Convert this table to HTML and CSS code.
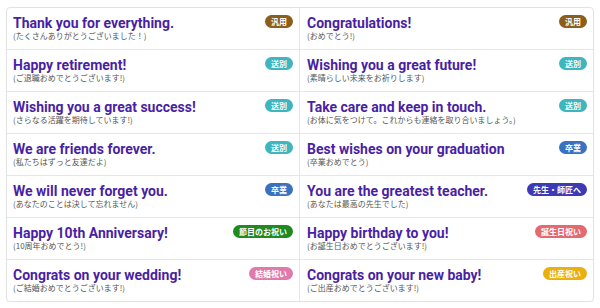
FILE: index.html
```html
<!DOCTYPE html>
<html lang="ja">
<head>
<meta charset="utf-8">
<link rel="stylesheet" href="styles.css">
</head>
<body>
<div class="board">
  <div class="cell"><div class="txt"><div class="en">Thank you for everything.</div><div class="jp">(たくさんありがとうございました！)</div></div><span class="badge b-gen">汎用</span></div>
  <div class="cell"><div class="txt"><div class="en">Congratulations!</div><div class="jp">(おめでとう!)</div></div><span class="badge b-gen">汎用</span></div>
  <div class="cell"><div class="txt"><div class="en">Happy retirement!</div><div class="jp">(ご退職おめでとうございます!)</div></div><span class="badge b-fare">送別</span></div>
  <div class="cell"><div class="txt"><div class="en">Wishing you a great future!</div><div class="jp">(素晴らしい未来をお祈りします)</div></div><span class="badge b-fare">送別</span></div>
  <div class="cell"><div class="txt"><div class="en">Wishing you a great success!</div><div class="jp">(さらなる活躍を期待しています!)</div></div><span class="badge b-fare">送別</span></div>
  <div class="cell"><div class="txt"><div class="en">Take care and keep in touch.</div><div class="jp">(お体に気をつけて。これからも連絡を取り合いましょう。)</div></div><span class="badge b-fare">送別</span></div>
  <div class="cell"><div class="txt"><div class="en">We are friends forever.</div><div class="jp">(私たちはずっと友達だよ)</div></div><span class="badge b-fare">送別</span></div>
  <div class="cell"><div class="txt"><div class="en">Best wishes on your graduation</div><div class="jp">(卒業おめでとう)</div></div><span class="badge b-grad">卒業</span></div>
  <div class="cell"><div class="txt"><div class="en">We will never forget you.</div><div class="jp">(あなたのことは決して忘れません)</div></div><span class="badge b-grad">卒業</span></div>
  <div class="cell"><div class="txt"><div class="en">You are the greatest teacher.</div><div class="jp">(あなたは最高の先生でした)</div></div><span class="badge b-teach">先生・師匠へ</span></div>
  <div class="cell"><div class="txt"><div class="en">Happy 10th Anniversary!</div><div class="jp">(10周年おめでとう!)</div></div><span class="badge b-anniv">節目のお祝い</span></div>
  <div class="cell"><div class="txt"><div class="en">Happy birthday to you!</div><div class="jp">(お誕生日おめでとうございます!)</div></div><span class="badge b-bday">誕生日祝い</span></div>
  <div class="cell"><div class="txt"><div class="en">Congrats on your wedding!</div><div class="jp">(ご結婚おめでとうございます!)</div></div><span class="badge b-wed">結婚祝い</span></div>
  <div class="cell"><div class="txt"><div class="en">Congrats on your new baby!</div><div class="jp">(ご出産おめでとうございます!)</div></div><span class="badge b-baby">出産祝い</span></div>
</div>
</body>
</html>
```

FILE: styles.css
```css
html, body {
  margin: 0;
  padding: 0;
  background: #ffffff;
}
body {
  padding: 7px 0 0 6px;
  font-family: Roboto, "Noto Sans CJK JP", sans-serif;
}
.board {
  width: 588px;
  box-sizing: border-box;
  border: 1px solid #e2e2e2;
  border-radius: 4px;
  box-shadow: 0 1px 1px rgba(0, 0, 0, 0.08);
  display: grid;
  grid-template-columns: 1fr 1fr;
  overflow: hidden;
}
.cell {
  box-sizing: border-box;
  height: 42px;
  border-bottom: 1px solid #e6e6e6;
  padding: 7px 6px 0 6px;
  display: flex;
  justify-content: space-between;
  align-items: flex-start;
}
.cell:nth-child(odd) {
  border-right: 1px solid #e6e6e6;
}
.cell:nth-child(even) {
  padding-left: 7px;
}
.cell:nth-last-child(-n+2) {
  border-bottom: none;
  height: 41px;
}
.en {
  font-family: Roboto, sans-serif;
  font-weight: 700;
  font-size: 14px;
  line-height: 16px;
  color: #4a1fa3;
  white-space: nowrap;
}
.jp {
  font-family: "Noto Sans CJK JP", sans-serif;
  font-size: 8px;
  line-height: 10px;
  color: #555555;
  white-space: nowrap;
}
.badge {
  flex: none;
  margin-top: 0;
  height: 13px;
  line-height: 13px;
  padding: 0 6px;
  border-radius: 7px;
  color: #ffffff;
  font-family: "Noto Sans CJK JP", sans-serif;
  font-weight: 700;
  font-size: 8px;
  white-space: nowrap;
}
.b-gen { background: #8b5e1c; }
.b-fare { background: #3db6bf; }
.b-grad { background: #3a72c0; }
.b-teach { background: #3e3ab6; }
.b-anniv { background: #1f8a1f; }
.b-bday { background: #e56a70; }
.b-wed { background: #e07aaa; }
.b-baby { background: #eab010; }
```
